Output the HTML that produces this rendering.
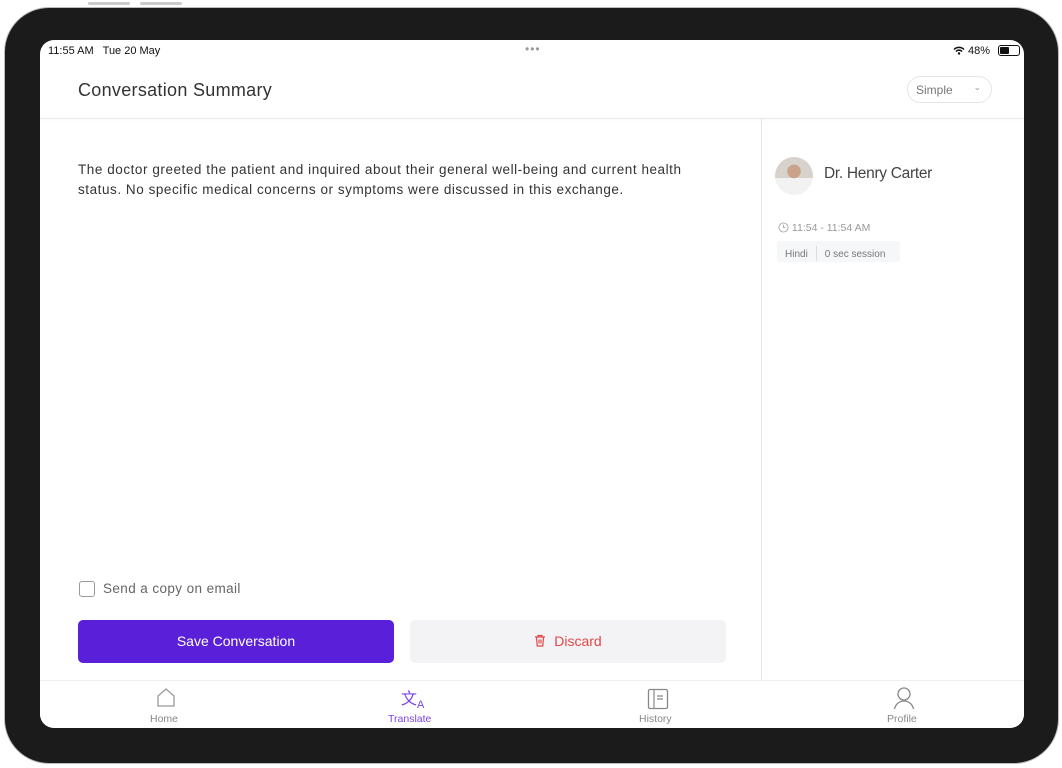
<!DOCTYPE html>
<html><head><style>
*{margin:0;padding:0;box-sizing:border-box}
body{width:1062px;height:768px;background:#fff;position:relative;overflow:hidden;font-family:"Liberation Sans",sans-serif;color:#333}
.dev{position:absolute;left:5px;top:8px;width:1053px;height:755px;background:#1b1b1b;border-radius:44px;box-shadow:0 0 0 1px #bbb}
.scr{position:absolute;left:40px;top:40px;width:984px;height:688px;background:#fff;border-radius:14px;overflow:hidden}
.abs{position:absolute}
</style></head><body>
<div class="abs" style="left:88px;top:2px;width:42px;height:3px;background:#ccc;border-radius:2px"></div>
<div class="abs" style="left:140px;top:2px;width:42px;height:3px;background:#ccc;border-radius:2px"></div>
<div class="dev"></div>
<div class="scr">
 <div class="abs" style="left:8px;top:5px;font-size:11px;color:#111">11:55 AM&nbsp;&nbsp; Tue 20 May</div>
 <div class="abs" style="left:485px;top:2px;font-size:12px;color:#999;letter-spacing:1px">•••</div>
 <div class="abs" style="left:913px;top:5px;font-size:11px;color:#111">
  <svg width="12" height="9" viewBox="0 0 12 9" style="vertical-align:-1px"><path d="M1 3.5a7 7 0 0 1 10 0M3 5.5a4 4 0 0 1 6 0" stroke="#111" stroke-width="1.5" fill="none"/><circle cx="6" cy="7.5" r="1.2" fill="#111"/></svg> 48%</div>
 <div class="abs" style="left:958px;top:5px;width:22px;height:11px;border:1px solid #111;border-radius:3px"><div style="width:9px;height:7px;margin:1px;background:#111;border-radius:1px"></div></div>
 <div class="abs" style="left:38px;top:40px;font-size:18px;color:#333;letter-spacing:0.3px">Conversation Summary</div>
 <div class="abs" style="left:867px;top:36px;width:85px;height:27px;border:1px solid #e5e5e5;border-radius:14px;font-size:12px;color:#777;padding:6px 0 0 8px">Simple<span style="position:absolute;right:10px;top:5px;font-size:9px;color:#999">⌄</span></div>
 <div class="abs" style="left:0;top:78px;width:984px;height:1px;background:#e8e8e8;box-shadow:0 1px 3px rgba(0,0,0,.05)"></div>
 <div class="abs" style="left:721px;top:79px;width:1px;height:561px;background:#e5e5e5"></div>
 <div class="abs" style="left:38px;top:120px;width:625px;font-size:13.5px;line-height:20px;color:#333;letter-spacing:0.55px">The doctor greeted the patient and inquired about their general well-being and current health status. No specific medical concerns or symptoms were discussed in this exchange.</div>
 <div class="abs" style="left:735px;top:117px;width:38px;height:38px;border-radius:50%;background:radial-gradient(circle at 50% 38%,#c9a48a 0 22%,transparent 23%),linear-gradient(#d8d2cc 0 55%,#f2f2f2 55%);"></div>
 <div class="abs" style="left:784px;top:125px;font-size:15.5px;color:#444;letter-spacing:-0.3px">Dr. Henry Carter</div>
 <div class="abs" style="left:738px;top:182px;font-size:10.5px;color:#999"><svg width="11" height="11" viewBox="0 0 12 12" style="vertical-align:-2px"><circle cx="6" cy="6" r="5" stroke="#aaa" fill="none"/><path d="M6 3v3h2" stroke="#aaa" fill="none"/></svg> 11:54 - 11:54 AM</div>
 <div class="abs" style="left:737px;top:201px;width:123px;height:21px;background:#f6f7f8;border-radius:3px;font-size:10px;color:#777;padding:5px 0 0 8px">Hindi<span style="display:inline-block;width:1px;height:15px;background:#ddd;vertical-align:-4px;margin:0 8px"></span>0 sec session</div>
 <div class="abs" style="left:39px;top:541px;width:16px;height:16px;border:1.5px solid #999;border-radius:3px"></div>
 <div class="abs" style="left:63px;top:541px;font-size:13.5px;color:#666;letter-spacing:0.4px">Send a copy on email</div>
 <div class="abs" style="left:38px;top:580px;width:316px;height:43px;background:#5a1fd8;border-radius:5px;color:#fff;font-size:14px;text-align:center;line-height:43px">Save Conversation</div>
 <div class="abs" style="left:370px;top:580px;width:316px;height:43px;background:#f3f3f5;border-radius:5px;color:#e04848;font-size:14px;text-align:center;line-height:43px"><svg width="12" height="13" viewBox="0 0 12 13" style="vertical-align:-1px;margin-right:8px"><path d="M1 3h10M4 3V1.5h4V3M2.5 3l.7 9h5.6l.7-9M5 5.5v4M7 5.5v4" stroke="#e04848" stroke-width="1.2" fill="none"/></svg>Discard</div>
 <div class="abs" style="left:0;top:640px;width:984px;height:48px;background:#fff;border-top:1px solid #eee"></div>
 <svg class="abs" style="left:116px;top:648px" width="20" height="20" viewBox="0 0 20 20"><path d="M2 18V8l8-7 8 7v10z" stroke="#999" stroke-width="1.3" fill="none"/></svg>
 <div class="abs" style="left:110px;top:673px;font-size:10.5px;color:#888">Home</div>
 <div class="abs" style="left:361px;top:645px;font-size:16px;color:#7b45e0">文<sub style="font-size:11px">A</sub></div>
 <div class="abs" style="left:348px;top:673px;font-size:10.5px;color:#7b45e0">Translate</div>
 <svg class="abs" style="left:607px;top:648px" width="22" height="22" viewBox="0 0 22 22"><rect x="1.5" y="1.5" width="19" height="19" rx="1.5" stroke="#888" stroke-width="1.3" fill="none"/><path d="M7 1.5v19M10 8h6M10 11h6" stroke="#888" stroke-width="1.2"/></svg>
 <div class="abs" style="left:599px;top:673px;font-size:10.5px;color:#888">History</div>
 <svg class="abs" style="left:853px;top:646px" width="22" height="24" viewBox="0 0 22 24"><circle cx="11" cy="8" r="6" stroke="#888" stroke-width="1.3" fill="none"/><path d="M1.5 23c1-5 5-8 9.5-8s8.5 3 9.5 8" stroke="#888" stroke-width="1.3" fill="none"/></svg>
 <div class="abs" style="left:847px;top:673px;font-size:10.5px;color:#888">Profile</div>
</div>
</body></html>
